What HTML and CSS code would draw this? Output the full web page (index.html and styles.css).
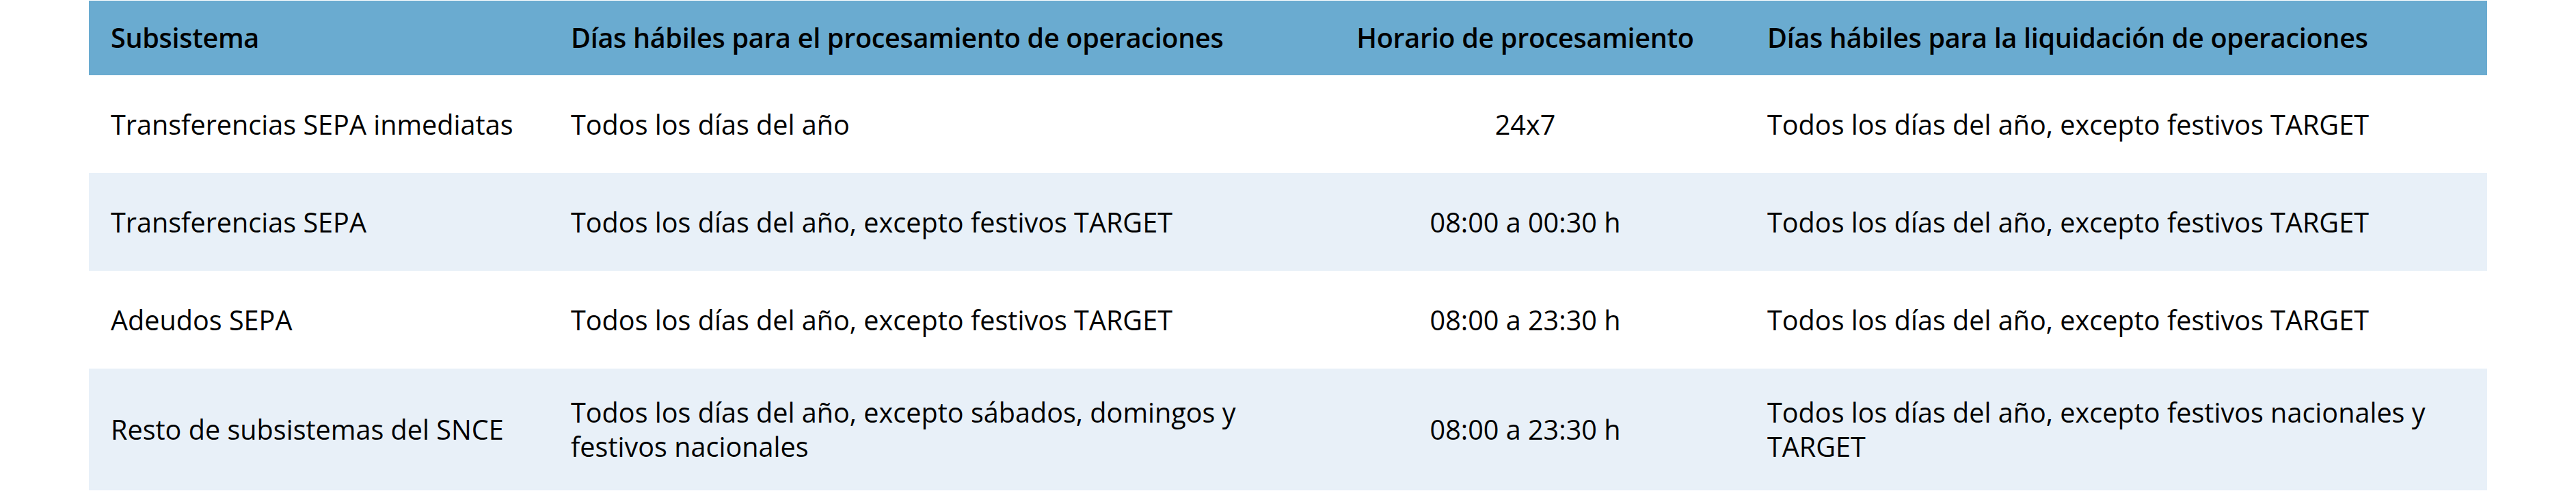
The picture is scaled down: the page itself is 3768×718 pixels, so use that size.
FILE: index.html
```html
<!DOCTYPE html>
<html lang="es">
<head>
<meta charset="utf-8">
<title>Subsistemas SNCE</title>
<link rel="stylesheet" href="styles.css">
</head>
<body>
<table class="schedule">
  <colgroup>
    <col class="c-sub">
    <col class="c-proc">
    <col class="c-hour">
    <col class="c-liq">
  </colgroup>
  <thead>
    <tr class="head-row">
      <th class="cell">Subsistema</th>
      <th class="cell">Días hábiles para el procesamiento de operaciones</th>
      <th class="cell center">Horario de procesamiento</th>
      <th class="cell">Días hábiles para la liquidación de operaciones</th>
    </tr>
  </thead>
  <tbody>
    <tr class="row">
      <td class="cell">Transferencias SEPA inmediatas</td>
      <td class="cell">Todos los días del año</td>
      <td class="cell center">24x7</td>
      <td class="cell">Todos los días del año, excepto festivos TARGET</td>
    </tr>
    <tr class="row alt">
      <td class="cell">Transferencias SEPA</td>
      <td class="cell">Todos los días del año, excepto festivos TARGET</td>
      <td class="cell center">08:00 a 00:30 h</td>
      <td class="cell">Todos los días del año, excepto festivos TARGET</td>
    </tr>
    <tr class="row">
      <td class="cell">Adeudos SEPA</td>
      <td class="cell">Todos los días del año, excepto festivos TARGET</td>
      <td class="cell center">08:00 a 23:30 h</td>
      <td class="cell">Todos los días del año, excepto festivos TARGET</td>
    </tr>
    <tr class="row alt">
      <td class="cell">Resto de subsistemas del SNCE</td>
      <td class="cell">Todos los días del año, excepto sábados, domingos y festivos nacionales</td>
      <td class="cell center">08:00 a 23:30 h</td>
      <td class="cell">Todos los días del año, excepto festivos nacionales y TARGET</td>
    </tr>
  </tbody>
</table>
</body>
</html>
```

FILE: styles.css
```css
html, body {
  margin: 0;
  padding: 0;
  background: #ffffff;
}

body {
  font-family: "Open Sans", "Noto Sans", "Liberation Sans", sans-serif;
  font-size: 39.6px;
  line-height: 50px;
  color: #000000;
}

.schedule {
  border-collapse: collapse;
  border-spacing: 0;
  table-layout: fixed;
  width: 3508px;
  margin: 1px 0 0 130px;
}

.c-sub { width: 673px; }
.c-proc { width: 1106px; }
.c-hour { width: 644px; }
.c-liq { width: 1085px; }

.cell {
  padding: 39px 32px;
  text-align: left;
  vertical-align: middle;
  font-weight: 400;
}

.center {
  text-align: center;
}

.head-row {
  height: 109px;
  background: #6aabd0;
}

.head-row .cell {
  font-weight: 600;
  letter-spacing: -0.33px;
  padding-top: 29px;
  padding-bottom: 30px;
}

.row {
  height: 143px;
  background: #ffffff;
}

.row.alt {
  background: #e8f0f8;
}
```
